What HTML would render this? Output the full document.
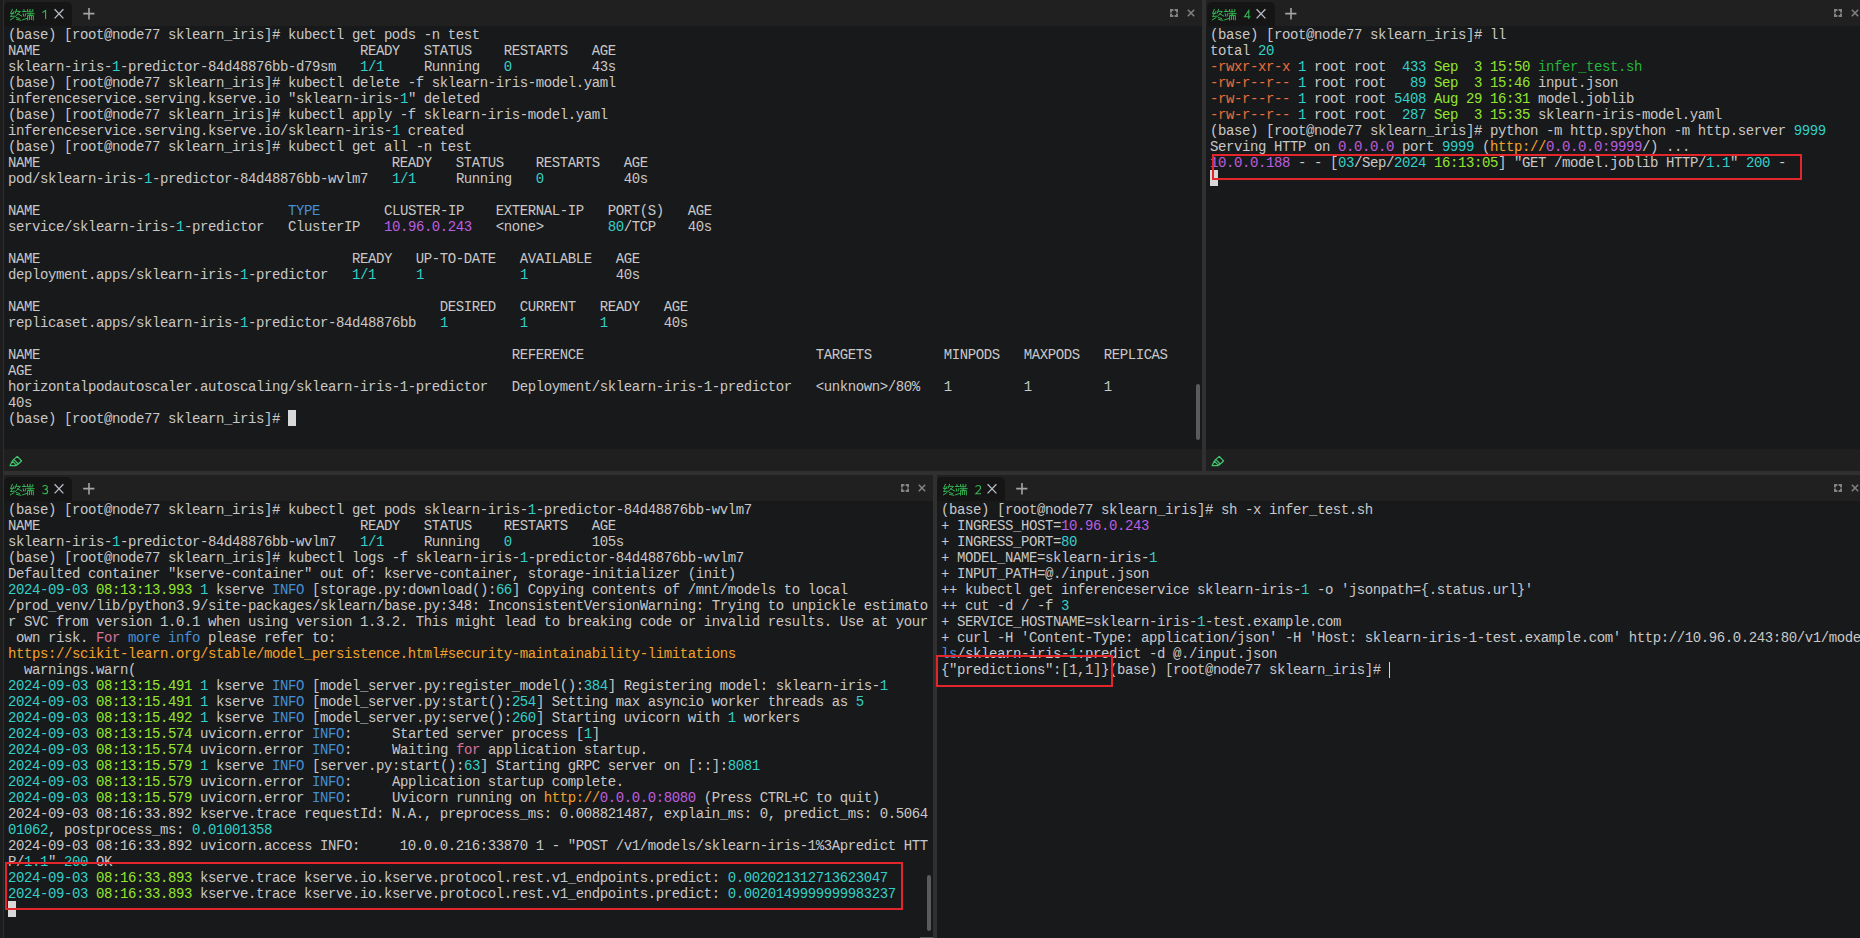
<!DOCTYPE html>
<html><head><meta charset="utf-8">
<style>
html,body{margin:0;padding:0}
body{width:1860px;height:938px;position:relative;overflow:hidden;background:#1d1d1d;font-family:"Liberation Mono",monospace}
.a{position:absolute}
.tabbar{background:#202020}
.term{background:#18191b}
.stat{background:#1f1f1f}
.div{background:#303030}
.tab{background:#151515;border-radius:5px 5px 0 0}
pre.t{position:absolute;margin:0;font-family:"Liberation Mono",monospace;font-size:14px;line-height:16px;letter-spacing:-0.404px;color:#c8c8c8;white-space:pre}
pre.t i{font-style:normal}
i.c{color:#34cfc8}
i.g{color:#92e630}
i.p{color:#bc5ee0}
i.b{color:#4590d4}
i.o{color:#f2a32a}
i.r{color:#ea6f3e}
i.k{color:#d5739b}
i.G{color:#27b53c}
pre.tl{left:8px;top:27px}
pre.tr{left:1210px;top:27px}
pre.bl{left:8px;top:502px}
pre.br{left:941px;top:502px}
.box{position:absolute;border:2px solid #e3262b;box-sizing:border-box}
svg{position:absolute;overflow:visible}
</style></head><body>
<svg width="0" height="0" style="position:absolute">
<defs>
<g id="zd" fill="none" stroke="#35b553" stroke-width="1" stroke-linecap="round" stroke-linejoin="round">
<path d="M2.4 0.3 L0.5 4.6 L4 4.2 M4 2.4 L0.5 7.6 L4.5 7.1 M0.3 10.9 L4 8.6"/>
<path d="M6.6 0.3 L5.2 4.2 M6.6 2.4 L10.4 2.4 L5.2 7.6 M7.6 4.7 L11.8 7.1 M6.2 8.5 L9.5 9.5 M6.6 10.4 L10.9 11.3"/>
<path d="M13.9 0.5 L14.2 2.2 M12.5 2.5 L16.3 2.5 M13.2 4.7 L13.7 7.1 M15.6 4.7 L15.1 7.1 M12.5 10.9 L16.6 9.5"/>
<path d="M17.5 0.6 V2.8 H22.8 V0.6 M20 0.3 V2.8 M17 4.7 H24.2 M20.4 4.7 L20 6.3 M17.6 11.2 V6.4 H23.3 V11 M19.4 6.6 V10.6 M21.4 6.6 V10.6"/>
</g>
<path id="d1" d="M0.5 2.5 L3.6 0.5 V9"/>
<path id="d2" d="M0.6 2.2 C0.9 1 1.8 0.5 3.1 0.5 C4.6 0.5 5.6 1.4 5.6 2.7 C5.6 4.2 4.3 5.3 0.6 8.8 H6"/>
<path id="d3" d="M0.6 1.6 C1.2 0.8 2 0.5 3 0.5 C4.5 0.5 5.3 1.3 5.3 2.4 C5.3 3.6 4.4 4.3 2.6 4.3 C4.6 4.3 5.6 5.1 5.6 6.5 C5.6 8 4.5 8.8 3 8.8 C1.9 8.8 1.1 8.4 0.5 7.6"/>
<path id="d4" d="M4.8 9 V0.5 L0.5 6.7 H6.4"/>
<g id="xx" fill="none" stroke="#b8bcc6" stroke-width="1.3"><path d="M0.6 0.2 L9.4 9.4 M9.4 0.2 L0.6 9.4"/></g>
<g id="pl" fill="none" stroke="#a4a4a4" stroke-width="1.6"><path d="M6 0 L6 11.4 M0.2 5.6 L11.4 5.6"/></g>
<g id="mx" fill="none" stroke="#828282" stroke-width="2" stroke-linecap="butt"><path d="M1 3.4 V1 H3.4 M4.6 1 H7 V3.4 M7 4.6 V7 H4.6 M3.4 7 H1 V4.6"/></g>
<g id="cx" fill="none" stroke="#828282" stroke-width="1.5"><path d="M0.8 0.8 L7.2 7.2 M7.2 0.8 L0.8 7.2"/></g>
<g id="br" fill="none" stroke="#3ec870" stroke-width="1.2" stroke-linejoin="round"><path d="M5.8 3.4 L9.3 0.4 L13.6 5 L10.2 8 Z M5.8 3.4 L4.4 5.1 L8.6 9.3 L10.2 8 M4.4 5.1 L2.1 9.6 L8.2 9.6"/></g>
</defs></svg>

<!-- left edge line -->
<div class="a" style="left:3px;top:0;width:1px;height:938px;background:#2e2e2e"></div>

<!-- ===== top-left pane ===== -->
<div class="a tabbar" style="left:4px;top:0;width:1198px;height:26px"></div>
<div class="a tab" style="left:4px;top:2px;width:68px;height:24px"></div>
<svg style="left:9.8px;top:8.7px" width="25" height="12"><use href="#zd"/></svg>
<svg style="left:42.0px;top:10.0px" width="7" height="10"><use href="#d1" fill="none" stroke="#35b553" stroke-width="1.1"/></svg>
<svg style="left:54.4px;top:8.9px" width="10" height="10"><use href="#xx"/></svg>
<svg style="left:83.3px;top:8.0px" width="11" height="11"><use href="#pl"/></svg>
<svg style="left:1170px;top:9px" width="8" height="8"><use href="#mx"/></svg>
<svg style="left:1187px;top:9px" width="8" height="8"><use href="#cx"/></svg>
<div class="a term" style="left:4px;top:26px;width:1198px;height:423px"></div>
<div class="a stat" style="left:4px;top:449px;width:1198px;height:22px"></div>
<svg style="left:8px;top:456px" width="14" height="10"><use href="#br"/></svg>
<div class="a" style="left:1196px;top:384px;width:4px;height:56px;border-radius:2px;background:#5a5b5e"></div>
<pre class="t tl">(base) [root@node77 sklearn_iris]# kubectl get pods -n test
NAME                                        READY   STATUS    RESTARTS   AGE
sklearn-iris-<i class="c">1</i>-predictor-84d48876bb-d79sm   <i class="c">1/1</i>     Running   <i class="c">0</i>          43s
(base) [root@node77 sklearn_iris]# kubectl delete -f sklearn-iris-model.yaml
inferenceservice.serving.kserve.io "sklearn-iris-<i class="c">1</i>" deleted
(base) [root@node77 sklearn_iris]# kubectl apply -f sklearn-iris-model.yaml
inferenceservice.serving.kserve.io/sklearn-iris-<i class="c">1</i> created
(base) [root@node77 sklearn_iris]# kubectl get all -n test
NAME                                            READY   STATUS    RESTARTS   AGE
pod/sklearn-iris-<i class="c">1</i>-predictor-84d48876bb-wvlm7   <i class="c">1/1</i>     Running   <i class="c">0</i>          40s

NAME                               <i class="b">TYPE</i>        CLUSTER-IP    EXTERNAL-IP   PORT(S)   AGE
service/sklearn-iris-<i class="c">1</i>-predictor   ClusterIP   <i class="p">10.96.0.243</i>   &lt;none&gt;        <i class="c">80</i>/TCP    40s

NAME                                       READY   UP-TO-DATE   AVAILABLE   AGE
deployment.apps/sklearn-iris-<i class="c">1</i>-predictor   <i class="c">1/1</i>     <i class="c">1</i>            <i class="c">1</i>           40s

NAME                                                  DESIRED   CURRENT   READY   AGE
replicaset.apps/sklearn-iris-<i class="c">1</i>-predictor-84d48876bb   <i class="c">1</i>         <i class="c">1</i>         <i class="c">1</i>       40s

NAME                                                           REFERENCE                             TARGETS         MINPODS   MAXPODS   REPLICAS
AGE
horizontalpodautoscaler.autoscaling/sklearn-iris-1-predictor   Deployment/sklearn-iris-1-predictor   &lt;unknown&gt;/80%   1         1         1
40s
(base) [root@node77 sklearn_iris]# </pre>
<div class="a" style="left:288px;top:410px;width:8px;height:16px;background:#d8d8d8"></div>

<!-- vertical divider top -->
<div class="a div" style="left:1202px;top:0;width:4px;height:475px"></div>

<!-- ===== top-right pane ===== -->
<div class="a tabbar" style="left:1206px;top:0;width:654px;height:26px"></div>
<div class="a tab" style="left:1207px;top:2px;width:68px;height:24px"></div>
<svg style="left:1211.8px;top:8.7px" width="25" height="12"><use href="#zd"/></svg>
<svg style="left:1243.8px;top:10.0px" width="7" height="10"><use href="#d4" fill="none" stroke="#35b553" stroke-width="1.1"/></svg>
<svg style="left:1256.4px;top:8.9px" width="10" height="10"><use href="#xx"/></svg>
<svg style="left:1285.3px;top:8.0px" width="11" height="11"><use href="#pl"/></svg>
<svg style="left:1834px;top:9px" width="8" height="8"><use href="#mx"/></svg>
<svg style="left:1851px;top:9px" width="8" height="8"><use href="#cx"/></svg>
<div class="a term" style="left:1206px;top:26px;width:654px;height:423px"></div>
<div class="a stat" style="left:1206px;top:449px;width:654px;height:22px"></div>
<svg style="left:1210px;top:456px" width="14" height="10"><use href="#br"/></svg>
<pre class="t tr">(base) [root@node77 sklearn_iris]# ll
total <i class="c">20</i>
<i class="r">-rwxr-xr-x</i> <i class="c">1</i> root root  <i class="c">433</i> <i class="g">Sep  3 15:50</i> <i class="G">infer_test.sh</i>
<i class="r">-rw-r--r--</i> <i class="c">1</i> root root   <i class="c">89</i> <i class="g">Sep  3 15:46</i> input.json
<i class="r">-rw-r--r--</i> <i class="c">1</i> root root <i class="c">5408</i> <i class="g">Aug 29 16:31</i> model.joblib
<i class="r">-rw-r--r--</i> <i class="c">1</i> root root  <i class="c">287</i> <i class="g">Sep  3 15:35</i> sklearn-iris-model.yaml
(base) [root@node77 sklearn_iris]# python -m http.spython -m http.server <i class="c">9999</i>
Serving HTTP on <i class="p">0.0.0.0</i> port <i class="c">9999</i> (<i class="o">http://</i><i class="p">0.0.0.0:9999</i>/) ...
<i class="p">10.0.0.188</i> - - [<i class="c">03</i>/Sep/<i class="c">2024</i> <i class="g">16:13:05</i>] "GET /model.joblib HTTP/<i class="c">1.1</i>" <i class="c">200</i> -</pre>
<div class="a" style="left:1210px;top:170px;width:8px;height:16px;background:#d8d8d8"></div>
<div class="box" style="left:1212px;top:154px;width:590px;height:26px"></div>

<!-- horizontal divider -->
<div class="a div" style="left:4px;top:471px;width:1856px;height:4px"></div>

<!-- ===== bottom-left pane ===== -->
<div class="a tabbar" style="left:4px;top:475px;width:929px;height:26px"></div>
<div class="a tab" style="left:4px;top:477px;width:68px;height:24px"></div>
<svg style="left:9.8px;top:483.7px" width="25" height="12"><use href="#zd"/></svg>
<svg style="left:41.8px;top:485.0px" width="7" height="10"><use href="#d3" fill="none" stroke="#35b553" stroke-width="1.1"/></svg>
<svg style="left:54.4px;top:483.9px" width="10" height="10"><use href="#xx"/></svg>
<svg style="left:83.3px;top:483.0px" width="11" height="11"><use href="#pl"/></svg>
<svg style="left:901px;top:484px" width="8" height="8"><use href="#mx"/></svg>
<svg style="left:918px;top:484px" width="8" height="8"><use href="#cx"/></svg>
<div class="a term" style="left:4px;top:501px;width:929px;height:437px"></div>
<div class="a" style="left:927px;top:875px;width:4px;height:56px;border-radius:2px;background:#5a5b5e"></div>
<pre class="t bl">(base) [root@node77 sklearn_iris]# kubectl get pods sklearn-iris-<i class="c">1</i>-predictor-84d48876bb-wvlm7
NAME                                        READY   STATUS    RESTARTS   AGE
sklearn-iris-<i class="c">1</i>-predictor-84d48876bb-wvlm7   <i class="c">1/1</i>     Running   <i class="c">0</i>          105s
(base) [root@node77 sklearn_iris]# kubectl logs -f sklearn-iris-<i class="c">1</i>-predictor-84d48876bb-wvlm7
Defaulted container "kserve-container" out of: kserve-container, storage-initializer (init)
<i class="c">2024-09-03</i> <i class="g">08:13:13.993</i> <i class="c">1</i> kserve <i class="b">INFO</i> [storage.py:download():<i class="c">66</i>] Copying contents of /mnt/models to local
/prod_venv/lib/python3.9/site-packages/sklearn/base.py:348: InconsistentVersionWarning: Trying to unpickle estimato
r SVC from version 1.0.1 when using version 1.3.2. This might lead to breaking code or invalid results. Use at your
 own risk. <i class="k">For</i> <i class="b">more info</i> please refer to:
<i class="o">https://scikit-learn.org/stable/model_persistence.html#security-maintainability-limitations</i>
  warnings.warn(
<i class="c">2024-09-03</i> <i class="g">08:13:15.491</i> <i class="c">1</i> kserve <i class="b">INFO</i> [model_server.py:register_model():<i class="c">384</i>] Registering model: sklearn-iris-<i class="c">1</i>
<i class="c">2024-09-03</i> <i class="g">08:13:15.491</i> <i class="c">1</i> kserve <i class="b">INFO</i> [model_server.py:start():<i class="c">254</i>] Setting max asyncio worker threads as <i class="c">5</i>
<i class="c">2024-09-03</i> <i class="g">08:13:15.492</i> <i class="c">1</i> kserve <i class="b">INFO</i> [model_server.py:serve():<i class="c">260</i>] Starting uvicorn with <i class="c">1</i> workers
<i class="c">2024-09-03</i> <i class="g">08:13:15.574</i> uvicorn.error <i class="b">INFO</i>:     Started server process [<i class="c">1</i>]
<i class="c">2024-09-03</i> <i class="g">08:13:15.574</i> uvicorn.error <i class="b">INFO</i>:     Waiting <i class="k">for</i> application startup.
<i class="c">2024-09-03</i> <i class="g">08:13:15.579</i> <i class="c">1</i> kserve <i class="b">INFO</i> [server.py:start():<i class="c">63</i>] Starting gRPC server on [::]:<i class="c">8081</i>
<i class="c">2024-09-03</i> <i class="g">08:13:15.579</i> uvicorn.error <i class="b">INFO</i>:     Application startup complete.
<i class="c">2024-09-03</i> <i class="g">08:13:15.579</i> uvicorn.error <i class="b">INFO</i>:     Uvicorn running on <i class="o">http://</i><i class="p">0.0.0.0:8080</i> (Press CTRL+C to quit)
2024-09-03 08:16:33.892 kserve.trace requestId: N.A., preprocess_ms: 0.008821487, explain_ms: 0, predict_ms: 0.5064
<i class="c">01062</i>, postprocess_ms: <i class="c">0.01001358</i>
2024-09-03 08:16:33.892 uvicorn.access INFO:     10.0.0.216:33870 1 - "POST /v1/models/sklearn-iris-1%3Apredict HTT
P/<i class="c">1.1</i>" <i class="c">200</i> OK
<i class="c">2024-09-03</i> <i class="g">08:16:33.893</i> kserve.trace kserve.io.kserve.protocol.rest.v1_endpoints.predict: <i class="c">0.002021312713623047</i>
<i class="c">2024-09-03</i> <i class="g">08:16:33.893</i> kserve.trace kserve.io.kserve.protocol.rest.v1_endpoints.predict: <i class="c">0.0020149999999983237</i></pre>
<div class="a" style="left:8px;top:901px;width:8px;height:16px;background:#d8d8d8"></div>
<div class="box" style="left:5px;top:862px;width:898px;height:48px"></div>
<div class="a" style="left:920px;top:937px;width:13px;height:1px;background:#5a5a5a"></div>

<!-- vertical divider bottom -->
<div class="a div" style="left:933px;top:475px;width:4px;height:463px"></div>

<!-- ===== bottom-right pane ===== -->
<div class="a tabbar" style="left:937px;top:475px;width:923px;height:26px"></div>
<div class="a tab" style="left:937px;top:477px;width:68px;height:24px"></div>
<svg style="left:942.8px;top:483.7px" width="25" height="12"><use href="#zd"/></svg>
<svg style="left:974.8px;top:485.0px" width="7" height="10"><use href="#d2" fill="none" stroke="#35b553" stroke-width="1.1"/></svg>
<svg style="left:987.4px;top:483.9px" width="10" height="10"><use href="#xx"/></svg>
<svg style="left:1016.3px;top:483.0px" width="11" height="11"><use href="#pl"/></svg>
<svg style="left:1834px;top:484px" width="8" height="8"><use href="#mx"/></svg>
<svg style="left:1851px;top:484px" width="8" height="8"><use href="#cx"/></svg>
<div class="a term" style="left:937px;top:501px;width:923px;height:437px"></div>
<pre class="t br">(base) [root@node77 sklearn_iris]# sh -x infer_test.sh
+ INGRESS_HOST=<i class="p">10.96.0.243</i>
+ INGRESS_PORT=<i class="c">80</i>
+ MODEL_NAME=sklearn-iris-<i class="c">1</i>
+ INPUT_PATH=@./input.json
++ kubectl get inferenceservice sklearn-iris-<i class="c">1</i> -o 'jsonpath={.status.url}'
++ cut -d / -f <i class="c">3</i>
+ SERVICE_HOSTNAME=sklearn-iris-<i class="c">1</i>-test.example.com
+ curl -H 'Content-Type: application/json' -H 'Host: sklearn-iris-1-test.example.com' http://10.96.0.243:80/v1/mode
<i class="b">ls</i>/sklearn-iris-<i class="c">1</i>:predict -d @./input.json
{"predictions":[1,1]}(base) [root@node77 sklearn_iris]# </pre>
<div class="a" style="left:1389px;top:662px;width:1px;height:16px;background:#d8d8d8"></div>
<div class="box" style="left:936px;top:655px;width:177px;height:32px"></div>
</body></html>
